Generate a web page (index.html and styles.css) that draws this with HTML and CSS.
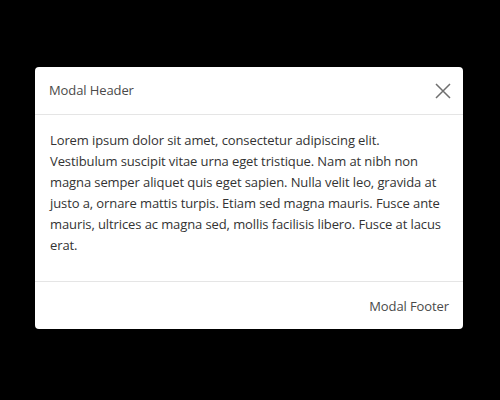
FILE: index.html
```html
<!DOCTYPE html>
<html>
<head>
<meta charset="utf-8">
<link rel="stylesheet" href="styles.css">
</head>
<body>
<div class="backdrop">
  <div class="modal">
    <div class="modal-header">
      <span class="modal-title">Modal Header</span>
      <button class="close" aria-label="Close">
        <svg width="16" height="16" viewBox="0 0 16 16"><path d="M1 1L15 15M15 1L1 15" stroke="#6f6f6f" stroke-width="1.5" fill="none"/></svg>
      </button>
    </div>
    <div class="modal-body">
      <p>Lorem ipsum dolor sit amet, consectetur adipiscing elit. Vestibulum suscipit vitae urna eget tristique. Nam at nibh non magna semper aliquet quis eget sapien. Nulla velit leo, gravida at justo a, ornare mattis turpis. Etiam sed magna mauris. Fusce ante mauris, ultrices ac magna sed, mollis facilisis libero. Fusce at lacus erat.</p>
    </div>
    <div class="modal-footer">Modal Footer</div>
  </div>
</div>
</body>
</html>
```
FILE: styles.css
```css
html, body { margin: 0; height: 100%; background: #000; }
.backdrop {
  height: 100%;
  display: flex;
  align-items: center;
  justify-content: center;
}
.modal {
  width: 428px;
  background: #fff;
  border-radius: 4px;
  font-family: "Open Sans", sans-serif;
  font-size: 13px;
  letter-spacing: -0.1px;
  color: #333;
  margin: -4px 0 0 -2px;
}
.modal-header {
  display: flex;
  align-items: center;
  justify-content: space-between;
  height: 47px;
  padding: 0 12px 0 14px;
  border-bottom: 1px solid #e5e5e5;
  color: #4a4a4a;
}
.modal-title { line-height: 21px; }
.close {
  background: none;
  border: 0;
  padding: 0;
  width: 16px;
  height: 16px;
  display: flex;
}
.modal-body { padding: 15px 15px 25px 15px; }
.modal-body p { margin: 0; line-height: 21px; }
.modal-footer {
  height: 47px;
  display: flex;
  align-items: center;
  justify-content: flex-end;
  padding: 0 14px;
  border-top: 1px solid #e5e5e5;
  color: #4a4a4a;
}
```
